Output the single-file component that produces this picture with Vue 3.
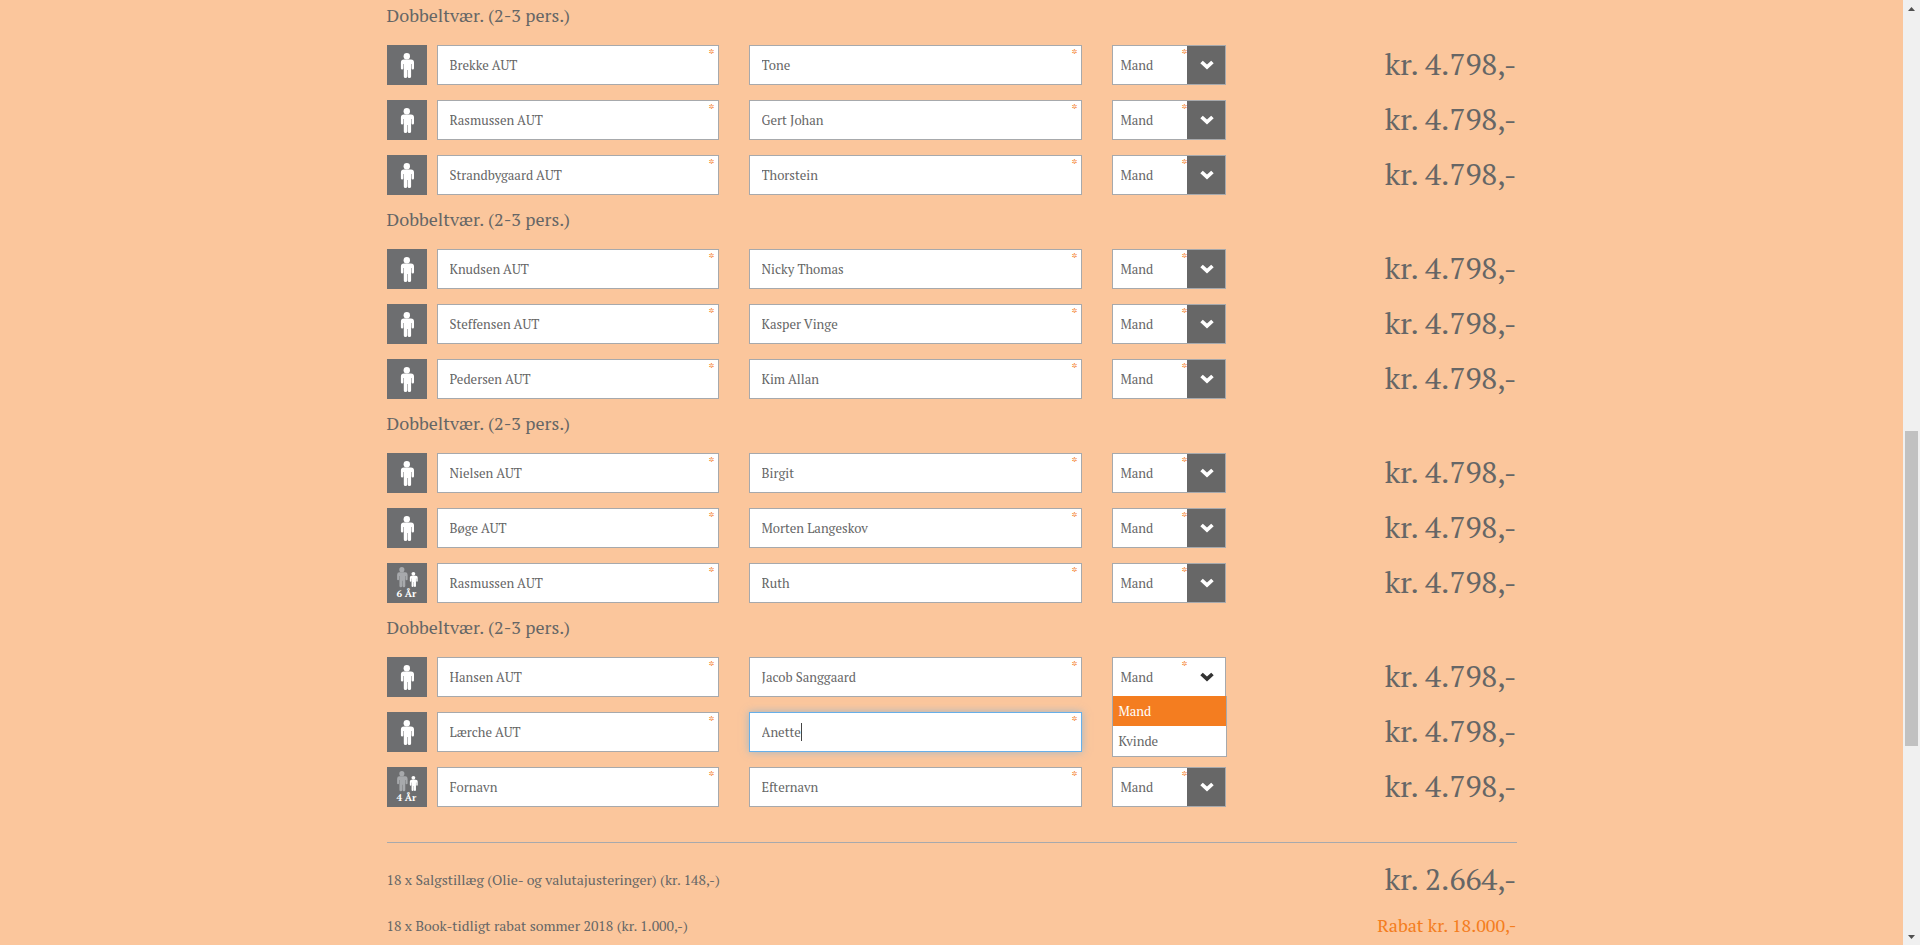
<script setup>
import { ref } from 'vue'

const person = (last, first, age = null) => ({ last, first, age, gender: 'Mand' })

const rooms = ref([
  [person('Brekke AUT', 'Tone'), person('Rasmussen AUT', 'Gert Johan'), person('Strandbygaard AUT', 'Thorstein')],
  [person('Knudsen AUT', 'Nicky Thomas'), person('Steffensen AUT', 'Kasper Vinge'), person('Pedersen AUT', 'Kim Allan')],
  [person('Nielsen AUT', 'Birgit'), person('Bøge AUT', 'Morten Langeskov'), person('Rasmussen AUT', 'Ruth', 6)],
  [person('Hansen AUT', 'Jacob Sanggaard'), person('Lærche AUT', 'Anette'), person('', '', 4)],
])

const genders = ['Mand', 'Kvinde']
const openMenu = ref('3-0')
const active = ref('3-1')
</script>

<template>
  <div class="page">
    <svg class="defs" aria-hidden="true">
      <symbol id="figure" viewBox="0 0 40 40" overflow="visible">
        <circle cx="19.800" cy="11.200" r="3.200" />
        <path d="M16 14.500h8q3 0 3 3v5.700q0 1.200-1.200 1.200t-1.200-1.200v-4.200h-.5v12.600q0 1.500-1.700 1.500t-1.700-1.500v-6.600h-.5v6.600q0 1.500-1.700 1.500t-1.700-1.500v-12.600h-.5v4.200q0 1.200-1.200 1.200t-1.200-1.200v-5.700q0-3 3-3z" />
      </symbol>
    </svg>

    <main class="scroller">
      <form class="content" @submit.prevent>
        <section v-for="(room, r) in rooms" :key="r" class="room">
          <h2>Dobbeltvær. (2-3 pers.)</h2>
          <div class="rows">
            <div v-for="(p, i) in room" :key="i" class="row">
              <div class="identity">
                <div class="avatar">
                  <svg viewBox="0 0 40 40" aria-hidden="true">
                    <use v-if="!p.age" href="#figure" width="40" height="40" fill="#fff" />
                    <template v-else>
                      <use href="#figure" width="40" height="40" fill="#a7a9ac" transform="translate(-1 -2.3) scale(.8)" />
                      <use href="#figure" width="40" height="40" fill="#fff" transform="translate(14.5 4.1) scale(.6)" />
                    </template>
                  </svg>
                  <span v-if="p.age" class="age">{{ p.age }} År</span>
                </div>
                <label class="field">
                  <input v-model="p.last" type="text" placeholder="Fornavn" aria-label="Fornavn" />
                  <span class="star">*</span>
                </label>
              </div>
              <label class="field" :class="{ active: active === r + '-' + i }">
                <input v-model="p.first" type="text" placeholder="Efternavn" aria-label="Efternavn" />
                <span class="star">*</span>
                <span v-if="active === r + '-' + i" class="caret"></span>
              </label>
              <div class="select" :class="{ open: openMenu === r + '-' + i }">
                <select v-model="p.gender" aria-label="Køn">
                  <option v-for="g in genders" :key="g">{{ g }}</option>
                </select>
                <span class="star">*</span>
                <span class="toggle">
                  <svg viewBox="0 0 14 10" aria-hidden="true"><path d="M0.300 3.200 2.800.700 7 4.500 11.200.700l2.500 2.500L7 9.500z" /></svg>
                </span>
                <ul v-if="openMenu === r + '-' + i" class="menu">
                  <li v-for="g in genders" :key="g" :class="{ chosen: g === p.gender }">{{ g }}</li>
                </ul>
              </div>
              <div class="price">kr. 4.798,-</div>
            </div>
          </div>
        </section>

        <div class="totals">
          <div class="total">
            <span>18 x Salgstillæg (Olie- og valutajusteringer) (kr. 148,-)</span>
            <span class="price">kr. 2.664,-</span>
          </div>
          <div class="total">
            <span>18 x Book-tidligt rabat sommer 2018 (kr. 1.000,-)</span>
            <span class="discount">Rabat kr. 18.000,-</span>
          </div>
        </div>
      </form>
    </main>

    <div class="scrollbar" aria-hidden="true">
      <svg viewBox="0 0 17 17"><path d="M5 11h7L8.500 7z" /></svg>
      <div class="track"><div class="thumb"></div></div>
      <svg viewBox="0 0 17 17"><path d="M5 7h7l-3.500 4z" /></svg>
    </div>
  </div>
</template>

<style>
body {
  background: #fbc69c;
}
</style>

<style scoped>
.page {
  display: flex;
  height: 100vh;
  overflow: hidden;
  background: #fbc69c;
  color: #666;
  font-family: "PT Serif", "Liberation Serif", serif;
  font-size: 13px;
}
.defs {
  position: absolute;
  width: 0;
  height: 0;
}
.scroller {
  flex: 1;
  min-width: 0;
  overflow: hidden;
}
.content {
  max-width: 1130px;
  margin: 0 auto;
}
.room + .room {
  margin-top: 9px;
}
h2 {
  margin: 0;
  padding-bottom: 15px;
  font-size: 18px;
  font-weight: 400;
  line-height: 30px;
}
.rows {
  display: flex;
  flex-direction: column;
  gap: 15px;
}
.row {
  display: grid;
  grid-template-columns: minmax(0, 332fr) minmax(0, 333fr) 114px minmax(0, 261fr);
  column-gap: 30px;
  align-items: center;
}
.identity {
  display: flex;
  gap: 10px;
}
.avatar {
  position: relative;
  flex: none;
  width: 40px;
  height: 40px;
  background: #6d6e70;
}
.avatar svg {
  display: block;
}
.age {
  position: absolute;
  inset: auto 0 3px;
  color: #fff;
  font-size: 10px;
  font-weight: 700;
  line-height: 12px;
  text-align: center;
}
.field {
  position: relative;
  display: block;
  flex: 1;
  min-width: 0;
}
input,
select {
  display: block;
  box-sizing: border-box;
  width: 100%;
  height: 40px;
  margin: 0;
  border: 1px solid #a7a9ac;
  border-radius: 0;
  outline: 0;
  background: #fff;
  color: #666;
  font: inherit;
}
input {
  padding: 0 12px;
}
input::placeholder {
  color: #666;
  opacity: 1;
}
select {
  padding: 0 40px 0 8px;
  appearance: none;
}
.active input {
  border-color: #66afe9;
  box-shadow: 0 0 8px rgba(102, 175, 233, 0.6);
}
.caret {
  position: absolute;
  top: 11px;
  left: 52px;
  width: 1px;
  height: 18px;
  background: #444;
}
.star {
  position: absolute;
  top: 2px;
  right: 4px;
  color: #f47d20;
  font-size: 13px;
  line-height: 14px;
}
.select {
  position: relative;
}
.select .star {
  right: 38px;
}
.toggle {
  position: absolute;
  top: 1px;
  right: 1px;
  bottom: 1px;
  display: flex;
  align-items: center;
  justify-content: center;
  box-sizing: border-box;
  width: 38px;
  padding-left: 2px;
  background: #676767;
  fill: #fff;
  pointer-events: none;
}
.toggle svg {
  width: 14px;
  height: 10px;
}
.open .toggle {
  background: #fff;
  fill: #333;
}
.menu {
  position: absolute;
  z-index: 2;
  top: 39px;
  left: 0;
  right: -1px;
  margin: 0;
  padding: 0;
  border: 1px solid #a7a9ac;
  border-top: 0;
  background: #fff;
  list-style: none;
}
.menu li {
  padding: 0 6px;
  line-height: 30px;
}
.menu .chosen {
  background: #f47d20;
  color: #fff;
}
.price {
  font-size: 30px;
  line-height: 38px;
  text-align: right;
  white-space: nowrap;
}
.row .price {
  padding-bottom: 2px;
}
.totals {
  margin-top: 35px;
  padding-top: 13px;
  border-top: 1px solid #a7a9ac;
}
.total {
  display: flex;
  align-items: center;
  justify-content: space-between;
  height: 46px;
  font-size: 14px;
}
.discount {
  color: #f47d20;
  font-size: 18px;
}
.scrollbar {
  display: flex;
  flex-direction: column;
  flex: none;
  width: 17px;
  background: #f0f0f0;
  fill: #505050;
}
.scrollbar svg {
  flex: none;
  width: 17px;
  height: 17px;
}
.track {
  display: grid;
  flex: 1;
  grid-template-rows: 414fr 315fr 182fr;
  padding: 0 2px;
}
.thumb {
  grid-row: 2;
  background: #c1c1c1;
}
</style>
